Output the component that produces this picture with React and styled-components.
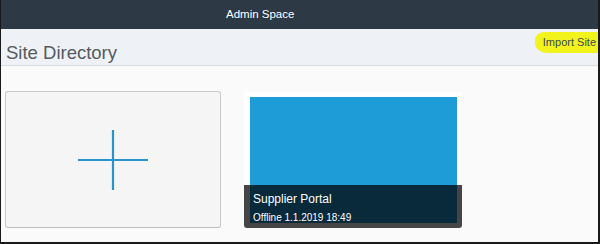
import React from "react";
import styled, { createGlobalStyle } from "styled-components";

const GlobalStyle = createGlobalStyle`
  html, body { margin: 0; padding: 0; background: #fafafa; }
  * { box-sizing: border-box; }
`;

const Frame = styled.div`
  width: 600px;
  height: 244px;
  display: flex;
  flex-direction: column;
  background: #fafafa;
  border-left: 1px solid #1a1a1a;
  border-right: 2px solid #1a1a1a;
  border-bottom: 2px solid #1a1a1a;
  font-family: "Liberation Sans", Arial, sans-serif;
  overflow: hidden;
`;

const TopBar = styled.div`
  height: 29px;
  flex: none;
  background: #2d3a46;
  color: #ffffff;
  font-size: 11.5px;
  display: flex;
  align-items: center;
  padding-left: 226px;
  padding-bottom: 2px;
  margin-left: -1px;
  margin-right: -2px;
`;

const Header = styled.div`
  height: 37px;
  flex: none;
  background: #eef2f6;
  border-bottom: 1px solid #d6dde4;
  display: flex;
  justify-content: space-between;
  align-items: flex-start;
`;

const Title = styled.h1`
  margin: 0;
  align-self: flex-end;
  padding: 0 0 3px 5px;
  font-size: 18.5px;
  font-weight: normal;
  color: #555a5f;
  line-height: 1;
`;

const ImportLink = styled.span`
  margin-top: 3px;
  padding: 4px 2px 5px 8px;
  background: #f2f21c;
  border-radius: 10px 0 0 12px / 8px 0 0 10px;
  color: #3b4a55;
  font-size: 11px;
  line-height: 12px;
`;

const Content = styled.div`
  flex: 1;
  display: flex;
  align-items: flex-start;
  gap: 23px;
  padding: 25px 0 0 4px;
`;

const AddTile = styled.div`
  width: 216px;
  height: 137px;
  background: #f5f5f5;
  border: 1px solid #c9c9c9;
  border-bottom-color: #bdbdbd;
  border-radius: 3px;
  display: flex;
  align-items: center;
  justify-content: center;
`;

const SiteCard = styled.div`
  position: relative;
  width: 218px;
  height: 136px;
  margin-top: 1px;
  background: #ffffff;
  padding: 5px 5px 5px 6px;
  border-radius: 3px;
`;

const SiteImage = styled.div`
  width: 100%;
  height: 100%;
  background: #1e9cd8;
`;

const Overlay = styled.div`
  position: absolute;
  left: 0;
  right: 0;
  bottom: 0;
  height: 43px;
  background: rgba(0, 0, 0, 0.73);
  border-radius: 0 0 3px 3px;
  padding: 7px 0 0 9px;
  color: #ffffff;
`;

const SiteName = styled.div`
  font-size: 12px;
  line-height: 14px;
`;

const SiteMeta = styled.div`
  margin-top: 6px;
  font-size: 10px;
  line-height: 12px;
`;

const PlusIcon = () => (
  <svg width="72" height="62" viewBox="0 0 72 62">
    <path d="M36 1 V61 M1 31 H71" stroke="#2a94c8" strokeWidth="2.2" fill="none" />
  </svg>
);

export default function App() {
  return (
    <>
      <GlobalStyle />
      <Frame>
        <TopBar>Admin Space</TopBar>
        <Header>
          <Title>Site Directory</Title>
          <ImportLink>Import Site</ImportLink>
        </Header>
        <Content>
          <AddTile>
            <PlusIcon />
          </AddTile>
          <SiteCard>
            <SiteImage />
            <Overlay>
              <SiteName>Supplier Portal</SiteName>
              <SiteMeta>Offline 1.1.2019 18:49</SiteMeta>
            </Overlay>
          </SiteCard>
        </Content>
      </Frame>
    </>
  );
}
